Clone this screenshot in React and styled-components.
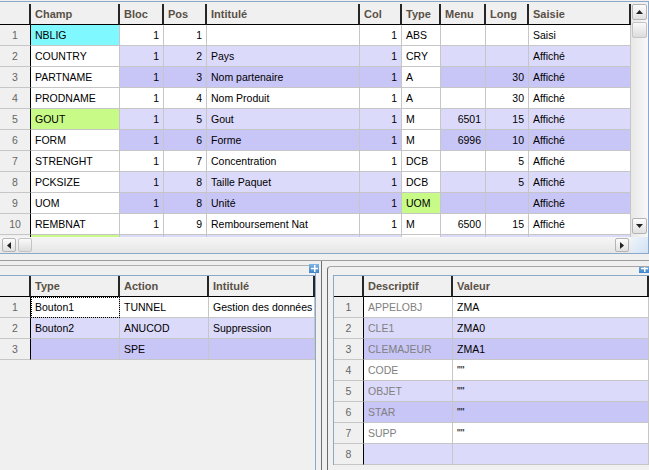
import React from 'react';
import styled, { createGlobalStyle } from 'styled-components';

const GlobalStyle = createGlobalStyle`
  html, body { margin: 0; padding: 0; }
  body {
    background: #f0f0f0;
    font-family: "Liberation Sans", Arial, sans-serif;
    font-size: 10.5px;
    color: #000;
    overflow: hidden;
  }
`;

const STRIPES = ['#ffffff', '#dcdafa', '#c8c6f6'];
const CYAN = '#80f8ff';
const LIME = '#c8fa88';
const FRAME = '#8aa8c8';

const Window = styled.div`
  width: 649px;
  height: 470px;
  overflow: hidden;
  display: flex;
  flex-direction: column;
  background: #f0f0f0;
`;

const TopPane = styled.div`
  margin-top: 1px;
  padding-top: 2px;
  border-top: 1px solid ${FRAME};
  border-right: 1px solid ${FRAME};
  border-bottom: 1px solid ${FRAME};
  display: flex;
  flex-direction: column;
`;

const GridArea = styled.div`
  display: flex;
  height: 233px;
`;

const Grid = styled.div`
  flex: 1;
  min-width: 0;
  overflow: hidden;
  display: grid;
  grid-template-columns: ${(p) => p.$cols};
  grid-auto-rows: 21px;
  align-content: start;
`;

const HeadCell = styled.div`
  box-sizing: border-box;
  background: #f0f0f0;
  border-right: 2px solid #262626;
  border-bottom: 1px solid #000;
  padding: 0 4px;
  display: flex;
  align-items: center;
  font-size: 11px;
  font-weight: bold;
  color: #5a5046;
  white-space: nowrap;
  overflow: hidden;
`;

const Cell = styled.div`
  box-sizing: border-box;
  background: ${(p) => p.$bg};
  border-right: 1px solid #c6c6c6;
  border-bottom: 1px solid #c6c6c6;
  padding: 0 4px;
  display: flex;
  align-items: center;
  justify-content: ${(p) => (p.$align === 'right' ? 'flex-end' : 'flex-start')};
  color: ${(p) => (p.$muted ? '#808080' : '#000')};
  white-space: nowrap;
  overflow: hidden;
  outline: ${(p) => (p.$focus ? '1px dotted #000' : 'none')};
  outline-offset: -1px;
`;

const RowNum = styled(Cell)`
  background: #f0f0f0;
  border-right: 1px solid #000;
  justify-content: center;
  color: #666;
`;

const VScroll = styled.div`
  width: 17px;
  display: flex;
  flex-direction: column;
  align-items: center;
  padding-bottom: 3px;
  box-sizing: border-box;
  background: linear-gradient(to right, #e8e8e8, #f8f8f8);
`;

const HScroll = styled.div`
  height: 16px;
  display: flex;
  align-items: center;
  padding-left: 2px;
  background: linear-gradient(#f6f6f6, #e6e6e6);
`;

const ScrollBtn = styled.div`
  box-sizing: border-box;
  width: ${(p) => (p.$h ? 14 : 15)}px;
  height: ${(p) => (p.$h ? 14 : 16)}px;
  margin: ${(p) => p.$m || '0'};
  border: 1px solid #b4b4b4;
  border-radius: 2px;
  background: linear-gradient(#fdfdfd, #e0e0e0);
  display: flex;
  align-items: center;
  justify-content: center;
  flex-shrink: 0;
`;

const Thumb = styled(ScrollBtn)`
  background: linear-gradient(#fafafa, #dcdcdc);
  border-color: #c4c4c4;
`;

const Track = styled.div`
  flex: 1;
`;

const Corner = styled.div`
  width: 17px;
  height: 16px;
  margin-left: 2px;
  background: linear-gradient(135deg, #eef4fb, #d2e1f2);
`;

const Divider = styled.div`
  height: 6px;
  border-bottom: 1px solid #9c9c9c;
`;

const BottomRow = styled.div`
  flex: 1;
  display: flex;
  min-height: 0;
`;

const LeftPane = styled.div`
  position: relative;
  width: 316px;
  box-sizing: border-box;
  margin-top: 4px;
  padding-top: 9px;
  border-top: 1px solid #b0b0b0;
  border-right: 1px solid ${FRAME};
`;

const Sash = styled.div`
  width: 5px;
  border-right: 1px solid #707070;
`;

const RightPane = styled.div`
  position: relative;
  flex: 1;
  min-width: 0;
  margin: 5px 0 0 5px;
  padding: 8px 0 0 5px;
  border-top: 1px solid #a4a4a4;
  border-left: 1px solid #6c6c6c;
  border-top-left-radius: 4px;
  overflow: hidden;
`;

const GridFrame = styled.div`
  display: flex;
  border-top: 1px solid ${FRAME};
  border-left: ${(p) => (p.$left ? `1px solid ${FRAME}` : 'none')};
`;

const Expand = styled.div`
  position: absolute;
  top: ${(p) => p.$top}px;
  right: ${(p) => p.$right}px;
  width: 10px;
  height: 9px;
  background: linear-gradient(#7fb6e8, #3e86cc);
  display: flex;
  align-items: center;
  justify-content: center;
`;

function Arrow({ dir }) {
  const pts = {
    up: '0,4 3.5,0 7,4',
    down: '0,0 3.5,4 7,0',
    left: '4,0 0,3.5 4,7',
    right: '0,0 4,3.5 0,7',
  }[dir];
  const v = dir === 'up' || dir === 'down';
  return (
    <svg width={v ? 7 : 4} height={v ? 4 : 7} viewBox={v ? '0 0 7 4' : '0 0 4 7'}>
      <polygon points={pts} fill="#222" />
    </svg>
  );
}

function PlusIcon() {
  return (
    <svg width="7" height="7" viewBox="0 0 7 7">
      <rect x="3" y="0" width="1.5" height="7" fill="#fff" />
      <rect x="0" y="2.8" width="7" height="1.5" fill="#fff" />
    </svg>
  );
}

function DataGrid({ numWidth, columns, rows, focus }) {
  const cols = [`${numWidth}px`, ...columns.map((c) => c.width)].join(' ');
  return (
    <Grid $cols={cols}>
      <HeadCell />
      {columns.map((c) => (
        <HeadCell key={c.title}>{c.title}</HeadCell>
      ))}
      {rows.map((r, i) => (
        <React.Fragment key={i}>
          <RowNum>{r.partial ? '' : i + 1}</RowNum>
          {columns.map((c, j) => {
            const bg = (r.hl && r.hl[j]) || (c.plain ? '#ffffff' : STRIPES[i % 3]);
            return (
              <Cell
                key={j}
                $bg={bg}
                $align={c.align}
                $muted={c.muted}
                $focus={focus && focus[0] === i && focus[1] === j}
              >
                {r.cells[j]}
              </Cell>
            );
          })}
        </React.Fragment>
      ))}
    </Grid>
  );
}

const fieldColumns = [
  { title: 'Champ', width: '89px', plain: true },
  { title: 'Bloc', width: '44px', align: 'right' },
  { title: 'Pos', width: '43px', align: 'right' },
  { title: 'Intitulé', width: '153px' },
  { title: 'Col', width: '42px', align: 'right' },
  { title: 'Type', width: '39px', plain: true },
  { title: 'Menu', width: '45px', align: 'right' },
  { title: 'Long', width: '43px', align: 'right' },
  { title: 'Saisie', width: '1fr' },
];

const fieldRows = [
  { cells: ['NBLIG', '1', '1', '', '1', 'ABS', '', '', 'Saisi'], hl: { 0: CYAN } },
  { cells: ['COUNTRY', '1', '2', 'Pays', '1', 'CRY', '', '', 'Affiché'] },
  { cells: ['PARTNAME', '1', '3', 'Nom partenaire', '1', 'A', '', '30', 'Affiché'] },
  { cells: ['PRODNAME', '1', '4', 'Nom Produit', '1', 'A', '', '30', 'Affiché'] },
  { cells: ['GOUT', '1', '5', 'Gout', '1', 'M', '6501', '15', 'Affiché'], hl: { 0: LIME } },
  { cells: ['FORM', '1', '6', 'Forme', '1', 'M', '6996', '10', 'Affiché'] },
  { cells: ['STRENGHT', '1', '7', 'Concentration', '1', 'DCB', '', '5', 'Affiché'] },
  { cells: ['PCKSIZE', '1', '8', 'Taille Paquet', '1', 'DCB', '', '5', 'Affiché'] },
  { cells: ['UOM', '1', '8', 'Unité', '1', 'UOM', '', '', 'Affiché'], hl: { 5: LIME } },
  { cells: ['REMBNAT', '1', '9', 'Remboursement Nat', '1', 'M', '6500', '15', 'Affiché'] },
  { cells: ['', '', '', '', '', '', '', '', ''], hl: { 0: LIME }, partial: true },
];

const buttonColumns = [
  { title: 'Type', width: '89px' },
  { title: 'Action', width: '89px' },
  { title: 'Intitulé', width: '1fr' },
];

const buttonRows = [
  { cells: ['Bouton1', 'TUNNEL', 'Gestion des données'] },
  { cells: ['Bouton2', 'ANUCOD', 'Suppression'] },
  { cells: ['', 'SPE', ''] },
];

const paramColumns = [
  { title: 'Descriptif', width: '89px', muted: true },
  { title: 'Valeur', width: '1fr' },
];

const paramRows = [
  { cells: ['APPELOBJ', 'ZMA'] },
  { cells: ['CLE1', 'ZMA0'] },
  { cells: ['CLEMAJEUR', 'ZMA1'] },
  { cells: ['CODE', '""'] },
  { cells: ['OBJET', '""'] },
  { cells: ['STAR', '""'] },
  { cells: ['SUPP', '""'] },
  { cells: ['', ''] },
];

export default function App() {
  return (
    <Window>
      <GlobalStyle />
      <TopPane>
        <GridArea>
          <DataGrid numWidth={31} columns={fieldColumns} rows={fieldRows} />
          <VScroll>
            <ScrollBtn><Arrow dir="up" /></ScrollBtn>
            <Thumb $m="2px 0 0" />
            <Track />
            <ScrollBtn><Arrow dir="down" /></ScrollBtn>
          </VScroll>
        </GridArea>
        <HScroll>
          <ScrollBtn $h><Arrow dir="left" /></ScrollBtn>
          <Thumb $h $m="0 0 0 2px" />
          <Track />
          <ScrollBtn $h><Arrow dir="right" /></ScrollBtn>
          <Corner />
        </HScroll>
      </TopPane>
      <Divider />
      <BottomRow>
        <LeftPane>
          <Expand $top={-2} $right={-4}><PlusIcon /></Expand>
          <GridFrame>
            <DataGrid numWidth={31} columns={buttonColumns} rows={buttonRows} focus={[0, 0]} />
          </GridFrame>
        </LeftPane>
        <Sash />
        <RightPane>
          <Expand $top={-3} $right={0}><PlusIcon /></Expand>
          <GridFrame $left>
            <DataGrid numWidth={30} columns={paramColumns} rows={paramRows} />
          </GridFrame>
        </RightPane>
      </BottomRow>
    </Window>
  );
}
